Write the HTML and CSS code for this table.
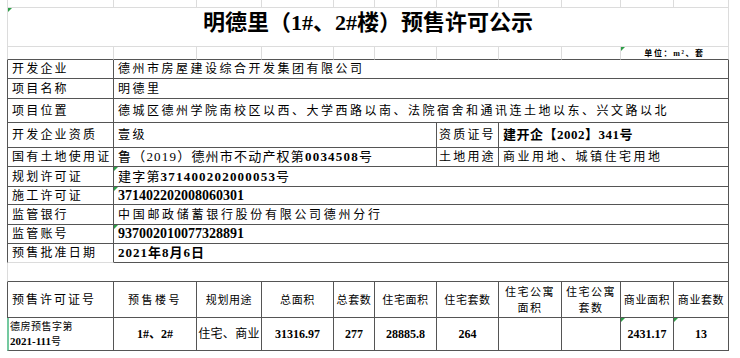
FILE: index.html
```html
<!DOCTYPE html>
<html lang="zh-CN">
<head>
<meta charset="utf-8">
<title>明德里（1#、2#楼）预售许可公示</title>
<link rel="stylesheet" href="styles.css">
</head>
<body>
<table class="sheet">
  <colgroup>
    <col class="w1"><col class="w2"><col class="w3"><col class="w4"><col class="w5"><col class="w6">
    <col class="w7"><col class="w8"><col class="w9"><col class="w10"><col class="w11">
  </colgroup>
  <tbody>
    <tr class="r-top"><td></td><td></td><td></td><td></td><td></td><td></td><td></td><td></td><td></td><td></td><td></td></tr>
    <tr class="r-title"><td colspan="11" class="title flag">明德里（1#、2#楼）预售许可公示</td></tr>
    <tr class="r-unit"><td></td><td></td><td></td><td></td><td></td><td></td><td></td><td></td><td></td><td colspan="2" class="unit flag">单位：m²、套</td></tr>

    <tr class="box h19"><td class="lbl">开发企业</td><td colspan="10" class="val">德州市房屋建设综合开发集团有限公司</td></tr>
    <tr class="box h20"><td class="lbl">项目名称</td><td colspan="10" class="val">明德里</td></tr>
    <tr class="box h24"><td class="lbl">项目位置</td><td colspan="10" class="val">德城区德州学院南校区以西、大学西路以南、法院宿舍和通讯连土地以东、兴文路以北</td></tr>
    <tr class="box h25"><td class="lbl">开发企业资质</td><td colspan="5" class="val">壹级</td><td class="lbl lbl2">资质证号</td><td colspan="4" class="val cert">建开企【2002】341号</td></tr>
    <tr class="box h19"><td class="lbl">国有土地使用证</td><td colspan="5" class="val sp12">鲁（2019）德州市不动产权第<span class="n">0034508</span>号</td><td class="lbl lbl2">土地用途</td><td colspan="4" class="val">商业用地、城镇住宅用地</td></tr>
    <tr class="box h20"><td class="lbl">规划许可证</td><td colspan="10" class="val sp12 flag">建字第<span class="n">371400202000053</span>号</td></tr>
    <tr class="box h18"><td class="lbl">施工许可证</td><td colspan="10" class="val num flag">371402202008060301</td></tr>
    <tr class="box h20"><td class="lbl">监管银行</td><td colspan="10" class="val bank">中国邮政储蓄银行股份有限公司德州分行</td></tr>
    <tr class="box h19"><td class="lbl">监管账号</td><td colspan="10" class="val num flag">937002010077328891</td></tr>
    <tr class="box h19 last"><td class="lbl">预售批准日期</td><td colspan="10" class="val date">2021年8月6日</td></tr>

    <tr class="r-gap"><td colspan="11"></td></tr>

    <tr class="box h36 head">
      <td class="hd-first">预售许可证号</td>
      <td class="hd wide">预售楼号</td>
      <td class="hd">规划用途</td>
      <td class="hd">总面积</td>
      <td class="hd">总套数</td>
      <td class="hd">住宅面积</td>
      <td class="hd">住宅套数</td>
      <td class="hd two">住宅公寓<br>面积</td>
      <td class="hd two">住宅公寓<br>套数</td>
      <td class="hd">商业面积</td>
      <td class="hd">商业套数</td>
    </tr>
    <tr class="box h33 data">
      <td class="permit">德房预售字第<br><span class="pn">2021-111</span>号</td>
      <td class="d">1#、2#</td>
      <td class="use">住宅、商业</td>
      <td class="d">31316.97</td>
      <td class="d">277</td>
      <td class="d">28885.8</td>
      <td class="d">264</td>
      <td class="d"></td>
      <td class="d"></td>
      <td class="d flag">2431.17</td>
      <td class="d flag">13</td>
    </tr>
  </tbody>
</table>
</body>
</html>
```

FILE: styles.css
```css
html, body {
  margin: 0;
  padding: 0;
  background: #ffffff;
}

body {
  font-family: "Liberation Serif", "Noto Sans CJK SC", serif;
  color: #000000;
}

.sheet {
  border-collapse: separate;
  border-spacing: 0;
  table-layout: fixed;
  width: 722px;
  margin-left: 7px;
}

.w1 { width: 107px; }
.w2 { width: 83px; }
.w3 { width: 65px; }
.w4 { width: 72px; }
.w5 { width: 41px; }
.w6 { width: 62px; }
.w7 { width: 62px; }
.w8 { width: 63px; }
.w9 { width: 59px; }
.w10 { width: 53px; }
.w11 { width: 55px; }

.sheet td {
  padding: 0 4px;
  border-right: 1px solid #dcdcdc;
  border-bottom: 1px solid #dcdcdc;
  white-space: nowrap;
  font-size: 12px;
  line-height: 16px;
  vertical-align: middle;
}

.sheet td:first-child {
  border-left: 1px solid #dcdcdc;
}

/* top strip of gridlines */
.r-top { height: 8px; }
.sheet .r-top td {
  padding: 0;
  font-size: 0;
  line-height: 0;
}

/* title */
.r-title { height: 39px; }
.sheet td.title {
  text-align: center;
  font-size: 22px;
  font-weight: bold;
  line-height: 26px;
  padding-bottom: 9px;
}

/* unit row */
.r-unit { height: 13px; }
.sheet .r-unit td {
  border-bottom-color: #555555;
  padding: 0;
  line-height: 10px;
}
.sheet td.unit {
  text-align: center;
  vertical-align: bottom;
  font-size: 8px;
  font-weight: bold;
  letter-spacing: 1.6px;
}

/* boxed (dark) area */
.sheet .box td {
  border-right-color: #555555;
  border-bottom-color: #555555;
}
.sheet .box td:first-child {
  border-left-color: #555555;
}
.sheet .box.last td:first-child {
  border-bottom-color: #dcdcdc;
}

.h18 { height: 18px; }
.h19 { height: 19px; }
.h20 { height: 20px; }
.h24 { height: 24px; }
.h25 { height: 25px; }
.h33 { height: 33px; }
.h36 { height: 36px; }

.sheet td.lbl {
  letter-spacing: 2.2px;
  padding-right: 0;
}
.sheet td.lbl2 {
  padding-left: 2px;
}

.sheet td.val {
  letter-spacing: 2.5px;
}
.sheet td.sp12 {
  font-size: 13px;
  letter-spacing: 1.2px;
}
.sheet td.bank {
  letter-spacing: 2.7px;
}
.n {
  font-weight: bold;
}
.sheet td.num {
  font-size: 14px;
  font-weight: bold;
  letter-spacing: 0;
}
.sheet td.date {
  font-size: 13px;
  font-weight: bold;
  letter-spacing: 1px;
}
.sheet td.cert {
  font-size: 13px;
  font-weight: bold;
  letter-spacing: 0.5px;
}

/* empty gap row */
.r-gap { height: 19px; }
.sheet .r-gap td {
  border-right-color: #555555;
  border-bottom-color: #555555;
}

/* bottom table header */
.sheet .head td {
  text-align: center;
  padding: 0 1px;
  font-size: 11px;
  letter-spacing: 0.6px;
}
.sheet .head td.hd-first {
  text-align: left;
  padding-left: 4px;
  font-size: 12px;
  letter-spacing: 2px;
}
.sheet .head td.wide {
  letter-spacing: 2.5px;
}
.sheet .head td.two {
  white-space: normal;
  line-height: 16px;
  letter-spacing: 1.5px;
}

/* bottom table data */
.sheet .data td {
  text-align: center;
  padding: 0 1px;
  font-size: 12px;
  font-weight: bold;
}
.sheet .data td.permit {
  text-align: left;
  border-left: 2px solid #74c9a0;
  padding-left: 1px;
  font-size: 10px;
  font-weight: normal;
  letter-spacing: 0.5px;
  line-height: 15px;
  white-space: normal;
}
.pn {
  font-size: 11px;
  font-weight: bold;
  letter-spacing: 0;
}
.sheet .data td.use {
  font-weight: normal;
  letter-spacing: 0.3px;
}

/* green error-indicator triangles */
.flag {
  position: relative;
}
.flag::before {
  content: "";
  position: absolute;
  left: 0;
  top: 0;
  border-top: 4px solid #2e9e48;
  border-right: 4px solid transparent;
}
```
